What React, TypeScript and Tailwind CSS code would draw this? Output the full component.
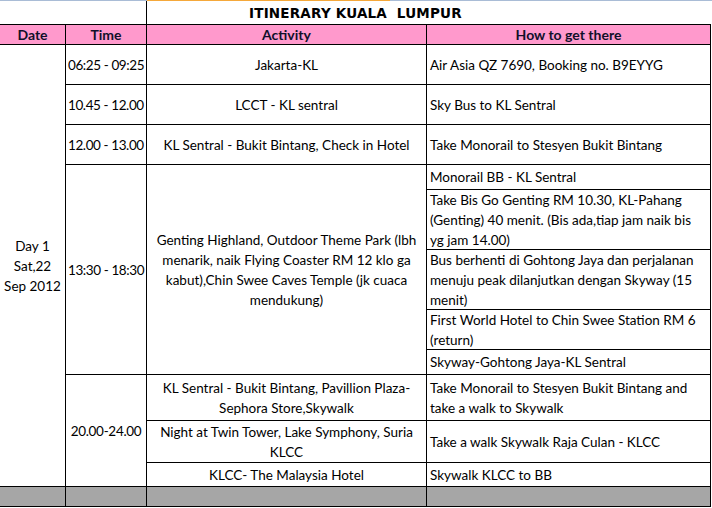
import React from "react";

const font = { fontFamily: "Lato, 'Open Sans', sans-serif" };

type CellProps = {
  col: string;
  row: string;
  lines: string[];
  align?: "left" | "center";
  className?: string;
};

function Cell({ col, row, lines, align = "center", className = "" }: CellProps) {
  return (
    <div
      className={`${col} ${row} border-r border-b border-black flex flex-col justify-center overflow-hidden leading-[20px] text-[13.5px] text-black ${
        align === "center" ? "items-center text-center" : "items-start text-left pl-[3px]"
      } ${className}`}
    >
      {lines.map((l, i) => (
        <span key={i} className="whitespace-nowrap">
          {l}
        </span>
      ))}
    </div>
  );
}

export default function App() {
  const timeCls = "tracking-[-0.4px] !pl-[2px]";
  return (
    <div className="w-[712px] h-[508px] bg-white overflow-hidden relative" style={font}>
      {/* excel column header edge */}
      <div className="flex h-px">
        <div className="w-[147px] bg-[#a9bcd6]"></div>
        <div className="w-[243px] bg-[#f5a83a]"></div>
        <div className="flex-1 bg-[#a9bcd6]"></div>
      </div>

      <div className="grid grid-cols-[66px_81px_280px_284px] grid-rows-[24px_20px_40px_40px_40px_25px_60px_60px_40px_25px_46px_42px_24px_20px]">
        {/* title row */}
        <div className="col-start-1 col-span-2 row-start-1 border-b border-r border-black"></div>
        <div className="col-start-3 col-span-2 row-start-1 border-b border-black flex items-center pl-[102px] pt-px">
          <span
            className="whitespace-pre font-bold text-[13.5px] tracking-[0.2px] text-black"
            style={{ fontFamily: "'DejaVu Sans', sans-serif" }}
          >
            ITINERARY KUALA  LUMPUR
          </span>
        </div>

        {/* header */}
        {["Date", "Time", "Activity", "How to get there"].map((h, i) => (
          <div
            key={h}
            className="row-start-2 border-r border-b border-black bg-[#ff99cc] flex items-center justify-center font-bold text-[14px] leading-[20px] text-[#10102a]"
            style={{ gridColumnStart: i + 1 }}
          >
            {h}
          </div>
        ))}

        {/* date */}
        <Cell col="col-start-1" row="row-start-3 row-end-14" lines={["Day 1", "Sat,22", "Sep 2012"]} />

        {/* time */}
        <Cell col="col-start-2" row="row-start-3" lines={["06:25 - 09:25"]} align="left" className={timeCls} />
        <Cell col="col-start-2" row="row-start-4" lines={["10.45 - 12.00"]} align="left" className={timeCls} />
        <Cell col="col-start-2" row="row-start-5" lines={["12.00 - 13.00"]} align="left" className={timeCls} />
        <Cell col="col-start-2" row="row-start-6 row-end-11" lines={["13:30 - 18:30"]} align="left" className={timeCls} />
        <Cell col="col-start-2" row="row-start-11 row-end-14" lines={["20.00-24.00"]} className="tracking-[-0.3px]" />

        {/* activity */}
        <Cell col="col-start-3" row="row-start-3" lines={["Jakarta-KL"]} />
        <Cell col="col-start-3" row="row-start-4" lines={["LCCT - KL sentral"]} />
        <Cell col="col-start-3" row="row-start-5" lines={["KL Sentral - Bukit Bintang, Check in Hotel"]} />
        <Cell
          col="col-start-3"
          row="row-start-6 row-end-11"
          lines={[
            "Genting Highland, Outdoor Theme Park (lbh",
            "menarik, naik Flying Coaster RM 12 klo ga",
            "kabut),Chin Swee Caves Temple (jk cuaca",
            "mendukung)",
          ]}
        />
        <Cell
          col="col-start-3"
          row="row-start-11"
          lines={["KL Sentral - Bukit Bintang, Pavillion Plaza-", "Sephora Store,Skywalk"]}
        />
        <Cell
          col="col-start-3"
          row="row-start-12"
          lines={["Night at Twin Tower, Lake Symphony, Suria", "KLCC"]}
        />
        <Cell col="col-start-3" row="row-start-13" lines={["KLCC- The Malaysia Hotel"]} />

        {/* how to get there */}
        <Cell col="col-start-4" row="row-start-3" lines={["Air Asia QZ 7690, Booking no. B9EYYG"]} align="left" />
        <Cell col="col-start-4" row="row-start-4" lines={["Sky Bus to KL Sentral"]} align="left" />
        <Cell col="col-start-4" row="row-start-5" lines={["Take Monorail to Stesyen Bukit Bintang"]} align="left" />
        <Cell col="col-start-4" row="row-start-6" lines={["Monorail BB - KL Sentral"]} align="left" />
        <Cell
          col="col-start-4"
          row="row-start-7"
          lines={[
            "Take Bis Go Genting RM 10.30, KL-Pahang",
            "(Genting) 40 menit. (Bis ada,tiap jam naik bis",
            "yg jam 14.00)",
          ]}
          align="left"
        />
        <Cell
          col="col-start-4"
          row="row-start-8"
          lines={[
            "Bus berhenti di Gohtong Jaya dan perjalanan",
            "menuju peak dilanjutkan dengan Skyway (15",
            "menit)",
          ]}
          align="left"
        />
        <Cell
          col="col-start-4"
          row="row-start-9"
          lines={["First World Hotel to Chin Swee Station RM 6", "(return)"]}
          align="left"
        />
        <Cell col="col-start-4" row="row-start-10" lines={["Skyway-Gohtong Jaya-KL Sentral"]} align="left" />
        <Cell
          col="col-start-4"
          row="row-start-11"
          lines={["Take Monorail to Stesyen Bukit Bintang and", "take a walk to Skywalk"]}
          align="left"
        />
        <Cell col="col-start-4" row="row-start-12" lines={["Take a walk Skywalk Raja Culan - KLCC"]} align="left" />
        <Cell col="col-start-4" row="row-start-13" lines={["Skywalk KLCC to BB"]} align="left" />

        {/* grey separator row */}
        <div className="col-start-1 row-start-14 border-r border-b border-black bg-[#a6a6a6]"></div>
        <div className="col-start-2 row-start-14 border-r border-b border-black bg-[#a6a6a6]"></div>
        <div className="col-start-3 row-start-14 border-r border-b border-black bg-[#a6a6a6]"></div>
        <div className="col-start-4 row-start-14 border-r border-b border-black bg-[#a6a6a6]"></div>
      </div>
    </div>
  );
}
